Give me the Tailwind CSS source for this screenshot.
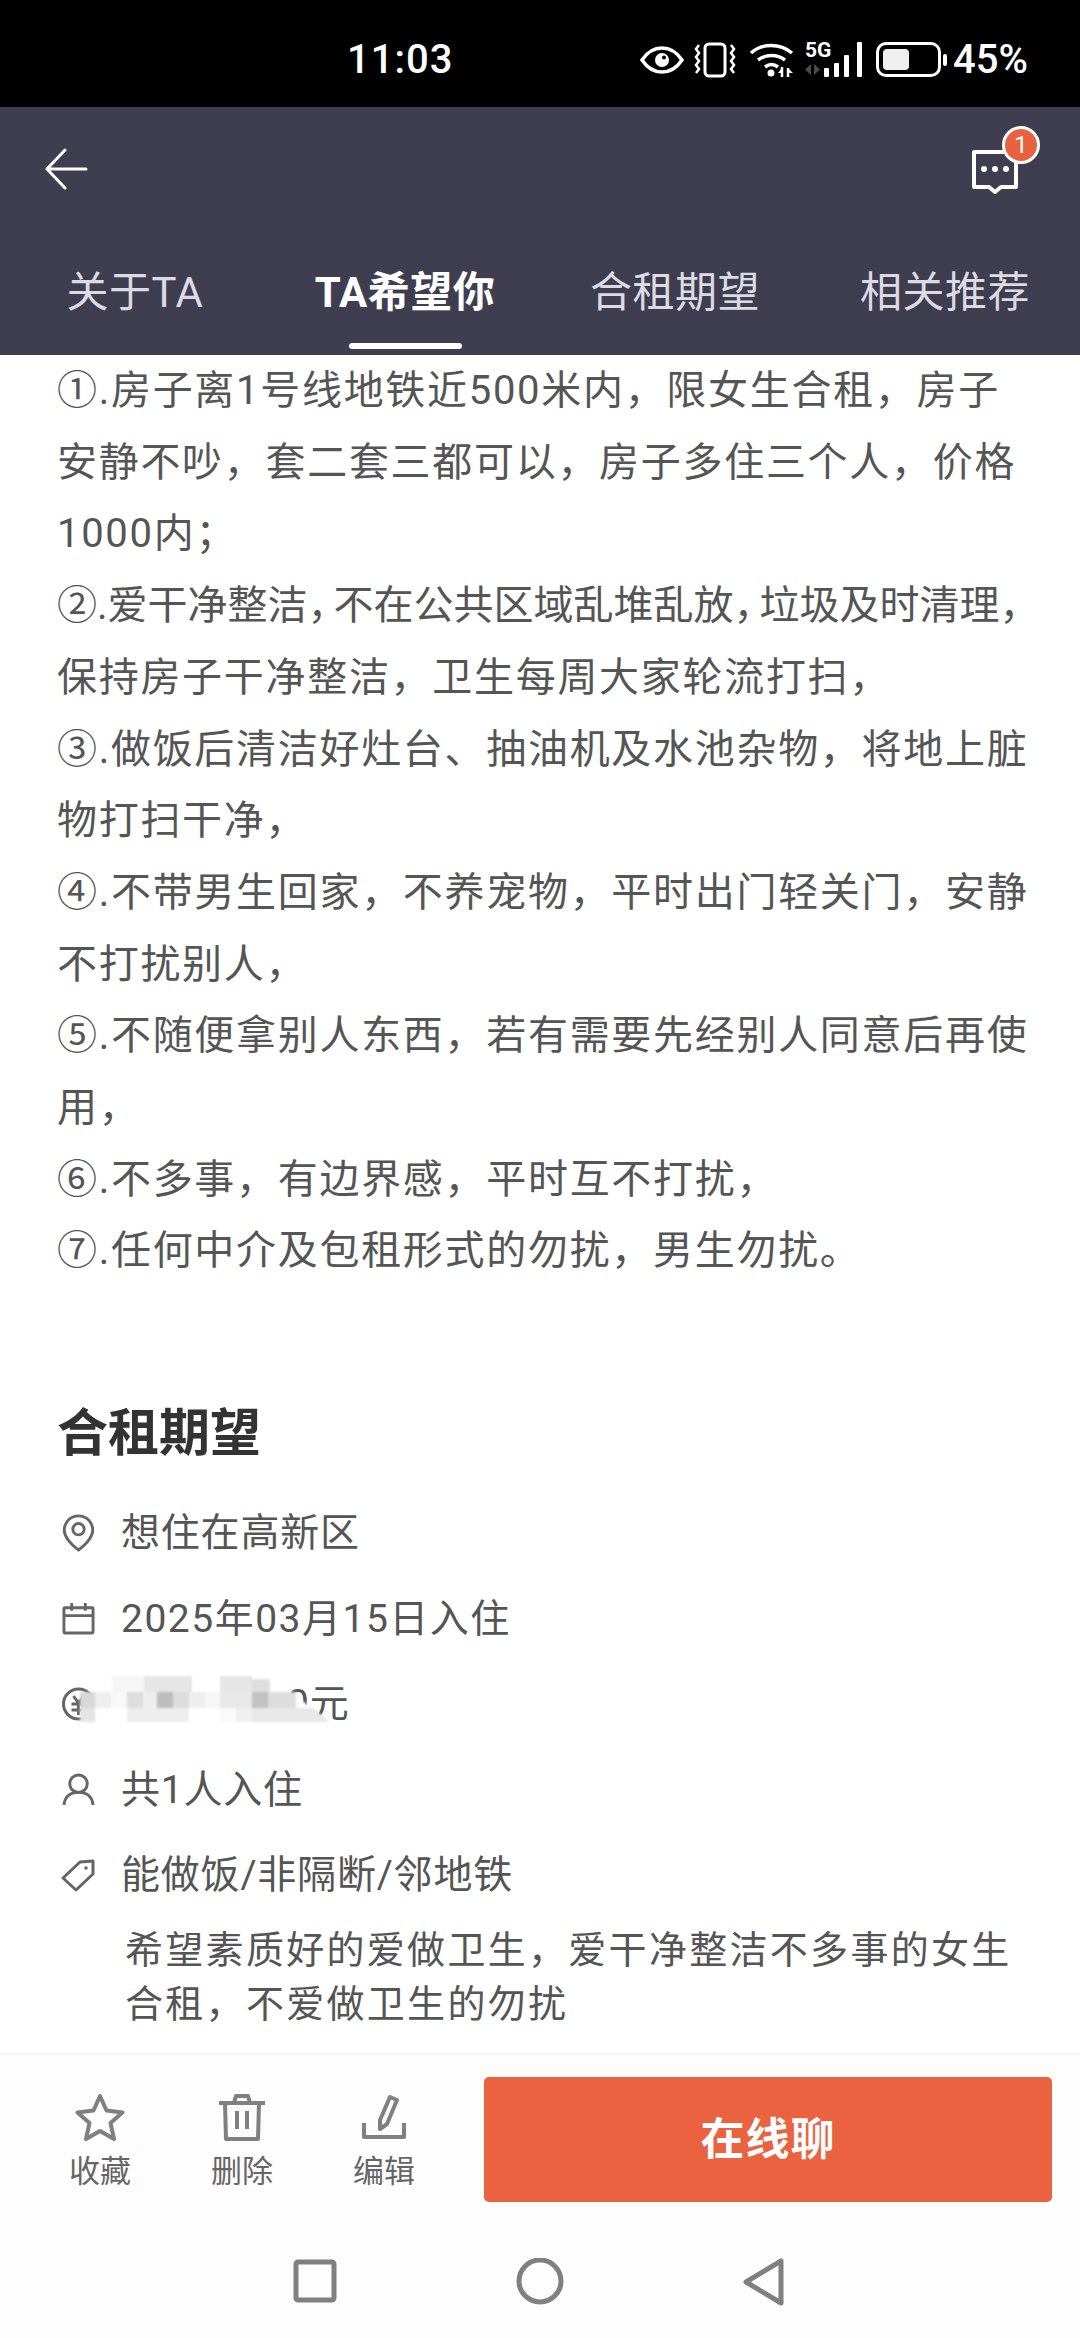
<!DOCTYPE html>
<html lang="zh-CN">
<head>
  <meta charset="UTF-8" />
  <meta name="viewport" content="width=device-width, initial-scale=1.0"/>
  <title>合租期望</title>
  <script src="https://cdn.jsdelivr.net/npm/@tailwindcss/browser@4"></script>
</head>
<body class="bg-white font-['Roboto','Noto_Sans_CJK_SC',sans-serif]">
<div class="relative w-[1080px] h-[2338px] overflow-hidden flex flex-col">

  <!-- status bar -->
  <div class="h-[107px] shrink-0 bg-black text-white flex items-center pt-[12px]">
    <span class="ml-[347px] w-[107px] text-[40px] font-medium tracking-[1px] leading-none">11:03</span>
    <svg class="ml-[186px]" width="44" height="30" viewBox="0 0 44 30" fill="none"><path d="M2 15C8 6 15 3 22 3s14 3 20 12c-6 9-13 12-20 12S8 24 2 15z" stroke="#fff" stroke-width="3.5"/><circle cx="22" cy="15" r="7" fill="#fff"/><circle cx="24" cy="12.500" r="2" fill="#000"/></svg>
    <svg class="ml-[10px]" width="42" height="36" viewBox="0 0 42 36" fill="none" stroke="#fff"><rect x="11" y="2" width="20" height="32" rx="4" stroke-width="3"/><path d="M5 3l-3 4 3 4-3 4 3 4-3 4 3 4-3 4M37 3l3 4-3 4 3 4-3 4 3 4-3 4 3 4" stroke-width="2.500"/></svg>
    <svg class="ml-[13px]" width="48" height="36" viewBox="0 0 48 36" fill="none" stroke="#fff" stroke-width="3.500"><path d="M2 11C13 1 31 1 43 11M9 18c8-6 19-6 27 0M16 25c4-3 9-3 13 0"/><circle cx="22" cy="31" r="3.500" fill="#fff" stroke="none"/><path d="M33 25v10M39 26v9" stroke-width="2.500"/><path d="M33 26l-4 5h4zM39 26l5 5h-5z" fill="#fff" stroke="none"/></svg>
    <div class="relative ml-[8px] w-[62px] h-[38px]">
      <span class="absolute left-0 top-[-2px] text-[21px] font-bold leading-[22px]">5G</span>
      <svg class="absolute left-0 top-0" width="62" height="38" viewBox="0 0 62 38" fill="#fff"><path d="M6 23v11l-6-5.500zM9 23v11l6-5.500z" fill="#4a4a4a"/><rect x="19" y="27" width="5" height="9" rx="1"/><rect x="29" y="22" width="5" height="14" rx="1"/><rect x="39" y="14" width="5" height="22" rx="1"/><rect x="52" y="1" width="5" height="35" rx="1"/></svg>
    </div>
    <div class="ml-[9px] w-[65px] h-[35px] rounded-[10px] border-[3px] border-white p-[4px]"><div class="w-[26px] h-full rounded-[4px] bg-[#f0f0f0]"></div></div>
    <div class="ml-[2px] w-[4px] h-[12px] rounded-full bg-white"></div>
    <span class="ml-[6px] text-[40px] font-medium leading-none">45%</span>
  </div>

  <!-- header -->
  <div class="h-[248px] shrink-0 bg-[#3f3d50] flex flex-col">
    <div class="relative h-[137px] shrink-0">
      <svg class="absolute left-[44px] top-[41px]" width="44" height="42" viewBox="0 0 44 42" fill="none" stroke="#fff" stroke-width="3" stroke-linecap="round" stroke-linejoin="round"><path d="M21 2L3 21l18 19M3 21h39"/></svg>
      <svg class="absolute left-[971px] top-[42px]" width="48" height="46" viewBox="0 0 48 46" fill="none"><path d="M3 3h42v35H30l-6 5-6-5H3z" stroke="#fff" stroke-width="4" stroke-linejoin="round"/><circle cx="13" cy="20" r="3" fill="#fff"/><circle cx="24" cy="20" r="3" fill="#fff"/><circle cx="35" cy="20" r="3" fill="#fff"/></svg>
      <div class="absolute left-[1002px] top-[19px] w-[38px] h-[38px] rounded-full bg-[#e96240] border-[3px] border-white flex items-center justify-center text-white text-[24px] leading-none">1</div>
    </div>
    <div class="mt-[21px] grid grid-cols-4 text-center text-[42px] leading-[56px] text-[#dcdbe4] tracking-[0.500px]">
      <span>关于TA</span>
      <span class="relative font-bold text-white">TA希望你<i class="absolute left-[79px] top-[78px] w-[113px] h-[6px] rounded-full bg-white"></i></span>
      <span>合租期望</span>
      <span>相关推荐</span>
    </div>
  </div>

  <!-- requirements text -->
  <div class="pl-[57px] pr-[48px] text-[40px] leading-[71.700px] tracking-[1.700px] text-[#555]">
    <p>①.房子离1号线地铁近500米内，限女生合租，房子安静不吵，套二套三都可以，房子多住三个人，价格1000内；</p>
    <p><span class="tracking-[0px]">②.爱干净整洁<span class="[font-feature-settings:'halt'] tracking-[6px]">，</span>不在公共区域乱堆乱放<span class="[font-feature-settings:'halt'] tracking-[6px]">，</span>垃圾及时清理<span class="[font-feature-settings:'halt'] tracking-[6px]">，</span></span><br>保持房子干净整洁，卫生每周大家轮流打扫，</p>
    <p>③.做饭后清洁好灶台、抽油机及水池杂物，将地上脏物打扫干净，</p>
    <p>④.不带男生回家，不养宠物，平时出门轻关门，安静不打扰别人，</p>
    <p>⑤.不随便拿别人东西，若有需要先经别人同意后再使用，</p>
    <p>⑥.不多事，有边界感，平时互不打扰，</p>
    <p>⑦.任何中介及包租形式的勿扰，男生勿扰。</p>
  </div>

  <!-- expectations -->
  <div class="pl-[57px] pr-[58px] mt-[117px] text-[#555]">
    <h2 class="text-[51px] leading-[60px] font-bold text-[#333]">合租期望</h2>
    <div class="mt-[39px] flex flex-col gap-[25.500px] text-[39px] leading-[60px] tracking-[0.800px]">
      <div class="flex items-center gap-[26px] pl-[5px]">
        <svg width="33" height="38" viewBox="0 0 34 40" fill="none" stroke="#666" stroke-width="3"><path d="M17 38C7 30 2 24 2 17a15 15 0 0 1 30 0c0 7-5 13-15 21z" stroke-linejoin="round"/><circle cx="17" cy="16" r="6"/></svg>
        <span>想住在高新区</span>
      </div>
      <div class="flex items-center gap-[26px] pl-[5px]">
        <svg width="33" height="33" viewBox="0 0 34 34" fill="none" stroke="#666" stroke-width="3"><rect x="2" y="6" width="30" height="26" rx="1"/><path d="M2 14h30M10 1v8M24 1v8"/></svg>
        <span class="tracking-[1.500px]">2025年03月15日入住</span>
      </div>
      <div class="flex items-center gap-[26px] pl-[3px]">
        <svg width="35" height="36" viewBox="0 0 34 36" fill="none" stroke="#666" stroke-width="3"><circle cx="18" cy="18" r="15"/><path d="M13 10l5 7 5-7M11 18h14M11 24h14M18 17v12"/></svg>
        <span class="ml-[166px]">0元</span>
      </div>
      <div class="flex items-center gap-[26px] pl-[5px]">
        <svg width="33" height="33" viewBox="0 0 34 34" fill="none" stroke="#666" stroke-width="3"><circle cx="17" cy="11" r="9"/><path d="M2 33c1-9 7-13 15-13s14 4 15 13"/></svg>
        <span>共1人入住</span>
      </div>
      <div class="flex items-center gap-[26px] pl-[4px]">
        <svg width="34" height="34" viewBox="0 0 34 34" fill="none" stroke="#666" stroke-width="3" stroke-linejoin="round"><path d="M2 20L19 4l13-1v13L15 32z"/><circle cx="25" cy="10" r="1.800" fill="#666" stroke="none"/></svg>
        <span>能做饭/非隔断/邻地铁</span>
      </div>
    </div>
    <p class="ml-[68px] mt-[18px] text-[38px] leading-[54px] tracking-[2.300px]">希望素质好的爱做卫生，爱干净整洁不多事的女生合租，不爱做卫生的勿扰</p>
  </div>

  <!-- mosaic over the hidden price -->
  <svg class="absolute left-[80px] top-[1676px] blur-[1px]" width="260" height="64" viewBox="0 0 260 64">
    <path d="M0 20Q2 16 16 16H31V0H178Q195 0 206 16Q225 24 250 48V62H0Z" fill="#fff"/>
    <rect x="32" y="0" width="32" height="16" fill="#f6f6f6"/>
    <rect x="64" y="0" width="48" height="16" fill="#e6e6e6"/>
    <rect x="140" y="0" width="32" height="16" fill="#e6e6e6"/>
    <rect x="172" y="3" width="18" height="13" fill="#dedede"/>
    <rect x="0" y="16" width="15" height="16" fill="#d8d8d8"/>
    <rect x="15" y="16" width="16" height="16" fill="#eeeeee"/>
    <rect x="31" y="16" width="16" height="16" fill="#f8f8f8"/>
    <rect x="47" y="16" width="16" height="16" fill="#dddddd"/>
    <rect x="63" y="16" width="14" height="16" fill="#eeeeee"/>
    <rect x="77" y="16" width="16" height="16" fill="#bdbdbd"/>
    <rect x="93" y="16" width="16" height="16" fill="#dddddd"/>
    <rect x="109" y="16" width="16" height="16" fill="#eeeeee"/>
    <rect x="125" y="16" width="15" height="16" fill="#f6f6f6"/>
    <rect x="140" y="16" width="32" height="16" fill="#e8e8e8"/>
    <rect x="172" y="16" width="16" height="16" fill="#c2c2c2"/>
    <rect x="188" y="16" width="28" height="16" fill="#dddddd"/>
    <rect x="0" y="32" width="15" height="14" fill="#e4e4e4"/>
    <rect x="47" y="32" width="62" height="14" fill="#eeeeee"/>
    <rect x="140" y="32" width="16" height="14" fill="#fafafa"/>
    <rect x="156" y="32" width="16" height="14" fill="#f0f0f0"/>
    <path d="M172 32H233L250 46H172z" fill="#e8e8e8"/>
  </svg>

  <!-- bottom bar -->
  <div class="absolute left-0 right-0 top-[2053px] bottom-0 bg-[#fdfdfd] border-t-2 border-[#f6f6f6] flex flex-col">
    <div class="flex items-start pt-[22px] pr-[28px] h-[171px]">
      <div class="w-[142px] ml-[29px] pt-[16px] flex flex-col items-center text-[31px] leading-[40px] text-[#666]">
        <svg width="50" height="48" viewBox="0 0 50 48" fill="none" stroke="#808080" stroke-width="4" stroke-linejoin="round"><path d="M25 3l6.500 14.500 16 2-12 10.500 3.500 16L25 38l-14 8 3.500-16-12-10.500 16-2z"/></svg>
        <span class="mt-[11px]">收藏</span>
      </div>
      <div class="w-[142px] pt-[16px] flex flex-col items-center text-[31px] leading-[40px] text-[#666]">
        <svg width="50" height="48" viewBox="0 0 50 48" fill="none" stroke="#808080" stroke-width="4" stroke-linejoin="round"><path d="M2 10h46M17 10l2-7h12l2 7M8 10l1 36h32l1-36M20 18v18M30 18v18"/></svg>
        <span class="mt-[11px]">删除</span>
      </div>
      <div class="w-[142px] pt-[16px] flex flex-col items-center text-[31px] leading-[40px] text-[#666]">
        <svg width="50" height="48" viewBox="0 0 50 48" fill="none" stroke="#808080" stroke-width="4" stroke-linejoin="round"><path d="M31 4l7 3-10 24-7 5 0-9zM5 30v14h40V30"/></svg>
        <span class="mt-[11px]">编辑</span>
      </div>
      <button class="ml-[29px] flex-1 h-[125px] rounded-[5px] bg-[#ea6240] text-white text-[44px] font-bold tracking-[1px]">在线聊</button>
    </div>
    <div class="flex items-start justify-center pt-[32px]">
      <svg width="520" height="48" viewBox="0 0 520 48" fill="none" stroke="#808080" stroke-width="5" stroke-linejoin="round"><rect x="16" y="4" width="38" height="38" rx="2"/><circle cx="260" cy="23" r="21"/><path d="M501 3v42l-35-21z"/></svg>
    </div>
  </div>
</div>
</body>
</html>
